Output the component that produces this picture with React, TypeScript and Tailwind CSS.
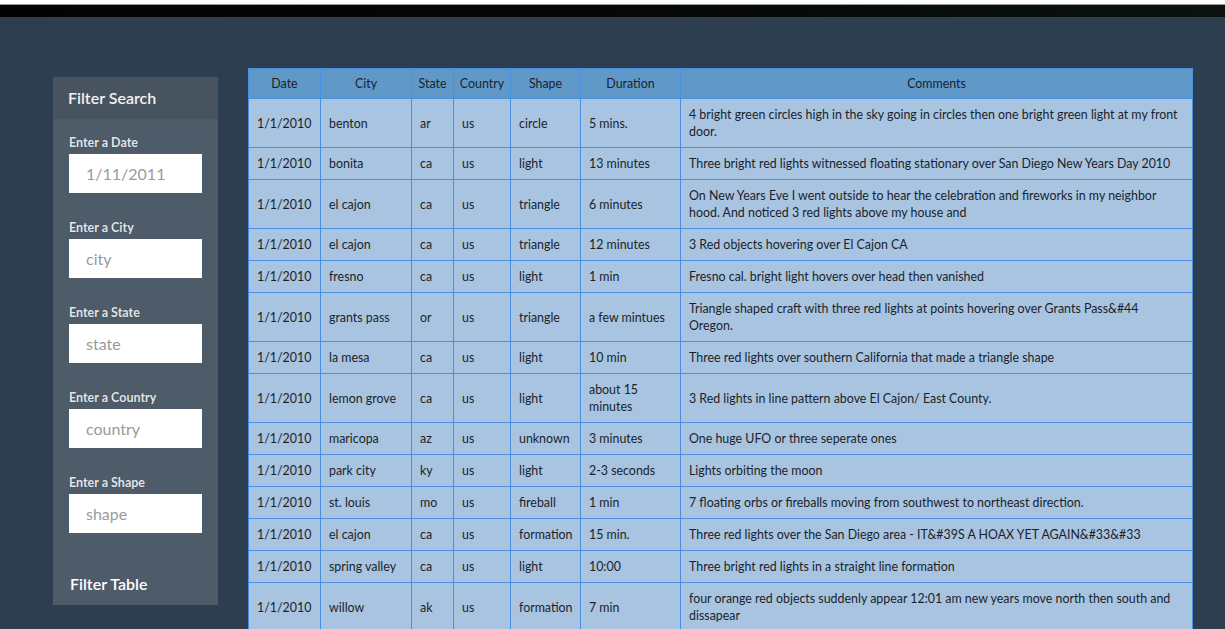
import React from "react"

type Sighting = {
  date: string
  city: string
  state: string
  country: string
  shape: string
  duration: string
  comments: string
}

const rows: Sighting[] = [
  { date: "1/1/2010", city: "benton", state: "ar", country: "us", shape: "circle", duration: "5 mins.", comments: "4 bright green circles high in the sky going in circles then one bright green light at my front door." },
  { date: "1/1/2010", city: "bonita", state: "ca", country: "us", shape: "light", duration: "13 minutes", comments: "Three bright red lights witnessed floating stationary over San Diego New Years Day 2010" },
  { date: "1/1/2010", city: "el cajon", state: "ca", country: "us", shape: "triangle", duration: "6 minutes", comments: "On New Years Eve I went outside to hear the celebration and fireworks in my neighbor hood. And noticed 3 red lights above my house and" },
  { date: "1/1/2010", city: "el cajon", state: "ca", country: "us", shape: "triangle", duration: "12 minutes", comments: "3 Red objects hovering over El Cajon CA" },
  { date: "1/1/2010", city: "fresno", state: "ca", country: "us", shape: "light", duration: "1 min", comments: "Fresno cal. bright light hovers over head then vanished" },
  { date: "1/1/2010", city: "grants pass", state: "or", country: "us", shape: "triangle", duration: "a few mintues", comments: "Triangle shaped craft with three red lights at points hovering over Grants Pass&#44 Oregon." },
  { date: "1/1/2010", city: "la mesa", state: "ca", country: "us", shape: "light", duration: "10 min", comments: "Three red lights over southern California that made a triangle shape" },
  { date: "1/1/2010", city: "lemon grove", state: "ca", country: "us", shape: "light", duration: "about 15 minutes", comments: "3 Red lights in line pattern above El Cajon/ East County." },
  { date: "1/1/2010", city: "maricopa", state: "az", country: "us", shape: "unknown", duration: "3 minutes", comments: "One huge UFO or three seperate ones" },
  { date: "1/1/2010", city: "park city", state: "ky", country: "us", shape: "light", duration: "2-3 seconds", comments: "Lights orbiting the moon" },
  { date: "1/1/2010", city: "st. louis", state: "mo", country: "us", shape: "fireball", duration: "1 min", comments: "7 floating orbs or fireballs moving from southwest to northeast direction." },
  { date: "1/1/2010", city: "el cajon", state: "ca", country: "us", shape: "formation", duration: "15 min.", comments: "Three red lights over the San Diego area - IT&#39S A HOAX YET AGAIN&#33&#33" },
  { date: "1/1/2010", city: "spring valley", state: "ca", country: "us", shape: "light", duration: "10:00", comments: "Three bright red lights in a straight line formation" },
  { date: "1/1/2010", city: "willow", state: "ak", country: "us", shape: "formation", duration: "7 min", comments: "four orange red objects suddenly appear 12:01 am new years move north then south and dissapear" },
]

const filters = [
  { label: "Enter a Date", placeholder: "1/11/2011" },
  { label: "Enter a City", placeholder: "city" },
  { label: "Enter a State", placeholder: "state" },
  { label: "Enter a Country", placeholder: "country" },
  { label: "Enter a Shape", placeholder: "shape" },
]

const headers = ["Date", "City", "State", "Country", "Shape", "Duration", "Comments"]

function Sidebar() {
  return (
    <aside className="mt-[9px] w-[165px] shrink-0 bg-[#4e5b69]">
      <div className="flex h-[42px] items-center bg-[#47535f] pl-[15px] text-[16px] font-semibold text-[#f2f2f2]">
        Filter Search
      </div>
      <div className="flex flex-col gap-[27px] px-[16px] pt-[16px]">
        {filters.map((f) => (
          <div key={f.label} className="flex flex-col">
            <label className="mb-[4px] text-[12.5px] leading-[15px] font-bold text-[#e4e6e8] [text-shadow:0_0_1px_rgba(0,0,0,0.4)]">
              {f.label}
            </label>
            <input
              placeholder={f.placeholder}
              className="h-[39px] w-[133px] bg-white pl-[17px] text-[16px] text-[#555] outline-none placeholder:text-[#9a9a9a]"
            />
          </div>
        ))}
      </div>
      <button type="button" className="mt-[42px] mb-[12px] pl-[17px] text-[16px] leading-[18px] font-semibold text-white">
        Filter Table
      </button>
    </aside>
  )
}

function SightingsTable() {
  return (
    <table className="w-[945px] table-fixed border-collapse text-[12.4px] text-[#1b1f2a]">
      <colgroup>
        <col className="w-[72px]" />
        <col className="w-[91px]" />
        <col className="w-[42px]" />
        <col className="w-[57px]" />
        <col className="w-[70px]" />
        <col className="w-[100px]" />
        <col />
      </colgroup>
      <thead>
        <tr className="bg-[#6098c8]">
          {headers.map((h) => (
            <th key={h} className="border border-[#4a90e2] px-1 py-[6.5px] text-center leading-4 font-normal">
              {h}
            </th>
          ))}
        </tr>
      </thead>
      <tbody>
        {rows.map((r, i) => (
          <tr key={i} className="bg-[#a8c4e0]">
            {[r.date, r.city, r.state, r.country, r.shape, r.duration, r.comments].map((v, j) => (
              <td key={j} className="border border-[#4a90e2] px-2 py-[7px] align-middle leading-[17px]">
                {v}
              </td>
            ))}
          </tr>
        ))}
      </tbody>
    </table>
  )
}

export default function App() {
  return (
    <div className="min-h-screen bg-[#2c3e50] font-['Lato','Open_Sans',sans-serif]">
      <div className="h-[5px] border-b border-[#9a9a9a] bg-white" />
      <div className="h-[12px] bg-gradient-to-r from-[#020304] via-[#050708] to-[#0b1110]" />
      <div className="flex items-start gap-[30px] pt-[51px] pl-[53px]">
        <Sidebar />
        <SightingsTable />
      </div>
    </div>
  )
}
